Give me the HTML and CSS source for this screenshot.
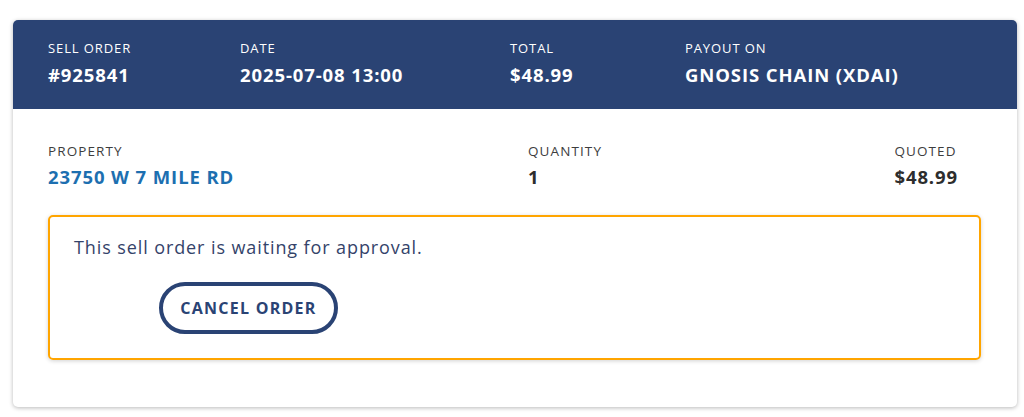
FILE: index.html
```html
<!DOCTYPE html>
<html lang="en">
<head>
<meta charset="utf-8">
<title>Sell order</title>
<link rel="stylesheet" href="styles.css">
</head>
<body>
<div class="card">
  <div class="card-head">
    <div class="field f-order">
      <div class="label">SELL ORDER</div>
      <div class="value">#925841</div>
    </div>
    <div class="field f-date">
      <div class="label">DATE</div>
      <div class="value">2025-07-08 13:00</div>
    </div>
    <div class="field f-total">
      <div class="label">TOTAL</div>
      <div class="value">$48.99</div>
    </div>
    <div class="field f-payout">
      <div class="label">PAYOUT ON</div>
      <div class="value">GNOSIS CHAIN (XDAI)</div>
    </div>
  </div>
  <div class="card-body">
    <div class="row">
      <div class="field f-property">
        <div class="label">PROPERTY</div>
        <a class="value link" href="#">23750 W 7 MILE RD</a>
      </div>
      <div class="field f-qty">
        <div class="label">QUANTITY</div>
        <div class="value">1</div>
      </div>
      <div class="field f-quoted">
        <div class="label">QUOTED</div>
        <div class="value">$48.99</div>
      </div>
    </div>
    <div class="alert">
      <p class="alert-text">This sell order is waiting for approval.</p>
      <button class="btn-outline" type="button">CANCEL ORDER</button>
    </div>
  </div>
</div>
</body>
</html>
```

FILE: styles.css
```css
* { box-sizing: border-box; }
html, body { margin: 0; padding: 0; background: #ffffff; }
body {
  font-family: "Open Sans", "Noto Sans", sans-serif;
  color: #2d2d2d;
}
.card {
  margin: 20px 7px 10px 13px;
  width: 1004px;
  height: 387px;
  background: #fff;
  border-radius: 5px;
  box-shadow: 0 1px 4px rgba(0,0,0,0.28);
  overflow: hidden;
  display: flex;
  flex-direction: column;
}
.card-head {
  background: #2a4374;
  color: #fff;
  height: 89px;
  padding: 20px 35px 0;
  display: grid;
  grid-template-columns: 192px 270px 175px 1fr;
}
.label {
  font-size: 13px;
  line-height: 16px;
  font-weight: 500;
  letter-spacing: 0.9px;
}
.value {
  font-size: 18.5px;
  line-height: 24px;
  font-weight: 700;
  margin-top: 7px;
  letter-spacing: 0.9px;
}
.card-body {
  padding: 34px 36px 0 35px;
}
.card-body .label {
  color: #3d3d3d;
  font-size: 13.5px;
  font-weight: 400;
  letter-spacing: 1.1px;
}
.row {
  display: grid;
  grid-template-columns: 480px 1fr auto;
  padding-right: 23px;
}
.link {
  display: block;
  color: #1d6fb0;
  text-decoration: none;
}
.card-body .value { margin-top: 6px; }
.alert {
  margin-top: 26px;
  height: 145px;
  border: 2px solid #ffa500;
  border-radius: 5px;
  box-shadow: 0 1px 4px rgba(0,0,0,0.18);
  padding: 18px 24px 0;
}
.alert-text {
  margin: 0;
  font-size: 18px;
  line-height: 24px;
  color: #34436a;
  letter-spacing: 0.9px;
}
.btn-outline {
  display: block;
  margin: 23px 0 0 85px;
  width: 179px;
  height: 52px;
  border: 4px solid #2a4374;
  border-radius: 26px;
  background: #fff;
  color: #2a4374;
  font-family: inherit;
  font-size: 16px;
  font-weight: 700;
  letter-spacing: 1.25px;
  padding: 0;
  cursor: pointer;
}
```
